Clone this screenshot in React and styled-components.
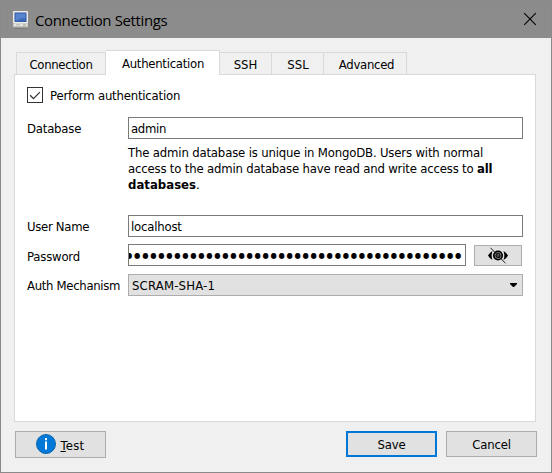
import React from "react";
import styled, { createGlobalStyle, css } from "styled-components";

const GlobalStyle = createGlobalStyle`
  * { box-sizing: border-box; }
  body { margin: 0; background: #efefef; }
`;

const Dialog = styled.main`
  width: 552px;
  height: 473px;
  display: flex;
  flex-direction: column;
  border: 1px solid #8a8a8a;
  background: #f0f0f0;
  color: #000;
  font: 13px/16px "DejaVu Sans Condensed", "DejaVu Sans", sans-serif;
  font-stretch: condensed;
  overflow: hidden;
`;

const TitleBar = styled.header`
  height: 37px;
  flex: none;
  display: flex;
  align-items: center;
  padding: 0 14px 0 11px;
  background: #8c8c8c;
`;

const Title = styled.h1`
  flex: 1;
  margin: 0 0 0 6px;
  font: 400 15px/20px "Open Sans", "Noto Sans", sans-serif;
  font-stretch: normal;
  letter-spacing: -0.37px;
`;

const CloseButton = styled.button`
  display: flex;
  padding: 0;
  margin-bottom: 1px;
  border: 0;
  background: none;
`;

const Label = styled.span`
  padding-top: ${(p) => p.$drop ?? 2}px;
  white-space: nowrap;
  letter-spacing: ${(p) => p.$track ?? -0.2}px;
`;

const TabList = styled.nav`
  display: flex;
  align-items: flex-end;
  height: 37px;
  flex: none;
  padding: 0 15px;
  margin-bottom: -1px;
  z-index: 1;
`;

const Tab = styled.button`
  display: flex;
  align-items: center;
  justify-content: center;
  width: ${(p) => p.$width}px;
  height: 22px;
  margin: 0 0 1px;
  padding: 0 0 0 ${(p) => p.$indent ?? 0}px;
  border: 1px solid #d9d9d9;
  border-width: 1px 1px 0 0;
  background: #f0f0f0;
  color: inherit;
  font: inherit;
  &:first-child { border-left-width: 1px; }
  ${(p) =>
    p.$active &&
    css`
      height: 25px;
      margin: 0;
      padding-bottom: 1px;
      background: #fff;
    `}
`;

const Panel = styled.section`
  width: 522px;
  height: 348px;
  flex: none;
  margin-left: 13px;
  padding: 12px;
  border: 1px solid #d9d9d9;
  background: #fff;
`;

const CheckRow = styled.label`
  display: flex;
  align-items: center;
  height: 16px;
  gap: 7px;
`;

const CheckBox = styled.span`
  display: flex;
  width: 16px;
  height: 16px;
  border: 1px solid #333;
`;

const Row = styled.div`
  display: grid;
  grid-template-columns: 101px 395px;
  align-items: center;
  height: 22px;
  margin-top: ${(p) => p.$gap}px;
`;

const Field = styled.div`
  display: flex;
  align-items: center;
  height: 22px;
  width: ${(p) => p.$width ?? 395}px;
  padding: 0 2px;
  border: 1px solid #7a7a7a;
  background: #fff;
  overflow: hidden;
`;

const PasswordField = styled(Field)`
  justify-content: flex-end;
  padding: 0;
`;

const Dots = styled.span`
  flex: none;
  margin-right: 2px;
  padding-top: 1px;
  font: 8px/20px "DejaVu Sans Condensed", "DejaVu Sans", sans-serif;
  font-stretch: condensed;
  letter-spacing: 1.74px;
  white-space: nowrap;
`;

const Group = styled.div`
  display: flex;
  align-items: center;
  gap: 8px;
`;

const Help = styled.p`
  margin: 6px 0 0 101px;
  height: 48px;
  white-space: nowrap;
`;

const HelpLine = styled.span`
  display: block;
  letter-spacing: ${(p) => p.$track}px;
`;

const RevealButton = styled.button`
  display: flex;
  justify-content: center;
  align-items: center;
  width: 48px;
  height: 21px;
  margin-top: 1px;
  padding: 0;
  border: 1px solid #adadad;
  background: #e1e1e1;
`;

const Select = styled.div`
  display: flex;
  align-items: center;
  justify-content: space-between;
  height: 22px;
  padding: 0 5px 0 3px;
  border: 1px solid #adadad;
  background: #e1e1e1;
`;

const Footer = styled.footer`
  display: flex;
  align-items: flex-start;
  padding: 9px 14px 0;
`;

const Button = styled.button`
  display: flex;
  align-items: center;
  justify-content: center;
  width: 91px;
  height: ${(p) => p.$height ?? 26}px;
  margin-left: ${(p) => p.$gap ?? 0}px;
  padding: 0;
  border: ${(p) => (p.$primary ? "2px solid #0078d7" : "1px solid #adadad")};
  background: #e1e1e1;
  color: inherit;
  font: inherit;
`;

const Mnemonic = styled.span`
  text-decoration: underline;
  text-underline-offset: 1px;
  text-decoration-thickness: 1px;
`;

const TestLabel = styled(Label)`
  margin: 1px 0 0 4px;
`;

const ComputerIcon = () => (
  <svg width="17" height="19" viewBox="0 0 17 19">
    <path d="M2 17.5h13v1H2z" fill="#6f6f6f" />
    <path d="M1.5 13.5h14l.5 3.8H1z" fill="#e4e3df" />
    <path d="M1 17h15" stroke="#a2a19c" />
    <rect x="1" y="1" width="15" height="12.5" rx=".8" fill="#ecebe6" />
    <rect x="2.5" y="2.5" width="12" height="9.5" fill="#2f57a5" />
    <path d="M3.5 3.5h10v4.5q-6 0-10 3.5z" fill="#5784cd" />
    <path d="M3.5 11.5q4-3.5 10-3.5v3z" fill="#3e6dbb" />
    <path d="M4 14.8h4" stroke="#b5b4ae" />
    <path d="M11 15h3" stroke="#8f9a80" />
  </svg>
);

const CloseIcon = () => (
  <svg width="14" height="14" viewBox="0 0 14 14">
    <path d="M1.2 1.2l11.6 11.6M12.8 1.2L1.2 12.8" stroke="#000" strokeWidth="1.1" />
  </svg>
);

const CheckIcon = () => (
  <svg width="14" height="14" viewBox="0 0 14 14">
    <path d="M2.2 7.2l3.3 3.4 6.4-6.5" fill="none" stroke="#333" strokeWidth="1.3" />
  </svg>
);

const HiddenEyeIcon = () => (
  <svg width="20" height="17" viewBox="0 0 20 17">
    <path d="M0 8.5Q1.500 5.500 4.500 4 2.800 8.500 4.500 13 1.500 11.500 0 8.500z" fill="#000" />
    <path d="M20 8.500Q18.500 5.500 15.500 4 17.200 8.500 15.500 13 18.500 11.500 20 8.500z" fill="#000" />
    <circle cx="10" cy="8.500" r="4.200" fill="#a8a8a8" stroke="#000" strokeWidth="1.700" />
    <circle cx="10" cy="8.500" r="2" fill="#777" stroke="#000" strokeWidth="1.200" />
    <path d="M2.500 .8L17.500 16.300" stroke="#222" strokeWidth="1" />
  </svg>
);

const ArrowIcon = () => (
  <svg width="7" height="4" viewBox="0 0 7 4">
    <path d="M0 0h7v1L4 4H3L0 1z" fill="#000" />
  </svg>
);

const InfoSvg = styled.svg`
  margin-bottom: 1px;
`;

const InfoIcon = () => (
  <InfoSvg width="20" height="20" viewBox="0 0 20 20">
    <circle cx="10" cy="10" r="9.500" fill="#0078d7" stroke="#0865ad" />
    <rect x="9" y="4" width="2" height="2.200" fill="#fff" />
    <rect x="9" y="7.500" width="2" height="8" fill="#fff" />
  </InfoSvg>
);

const tabs = [
  { name: "Connection", width: 90, track: -0.3 },
  { name: "Authentication", width: 114, active: true, track: -0.27, indent: 1 },
  { name: "SSH", width: 52, track: 0 },
  { name: "SSL", width: 52, track: 0, indent: 1 },
  { name: "Advanced", width: 83, track: -0.3, indent: 3 },
];

export default function App() {
  return (
    <>
      <GlobalStyle />
      <Dialog>
        <TitleBar>
          <ComputerIcon />
          <Title>Connection Settings</Title>
          <CloseButton aria-label="Close"><CloseIcon /></CloseButton>
        </TitleBar>
        <TabList>
          {tabs.map((tab) => (
            <Tab key={tab.name} $width={tab.width} $active={tab.active} $indent={tab.indent}>
              <Label $track={tab.track}>{tab.name}</Label>
            </Tab>
          ))}
        </TabList>
        <Panel>
          <CheckRow>
            <CheckBox><CheckIcon /></CheckBox>
            <Label>Perform authentication</Label>
          </CheckRow>
          <Row $gap={14}>
            <Label>Database</Label>
            <Field><Label $track={-0.3}>admin</Label></Field>
          </Row>
          <Help>
            <HelpLine $track={-0.165}>The admin database is unique in MongoDB. Users with normal</HelpLine>
            <HelpLine $track={-0.18}>access to the admin database have read and write access to <b>all</b></HelpLine>
            <HelpLine $track={0.02}><b>databases</b>.</HelpLine>
          </Help>
          <Row $gap={22}>
            <Label $track={-0.3}>User Name</Label>
            <Field><Label>localhost</Label></Field>
          </Row>
          <Row $gap={7}>
            <Label $drop={4}>Password</Label>
            <Group>
              <PasswordField $width={338}><Dots>{"●".repeat(42)}</Dots></PasswordField>
              <RevealButton aria-label="Show password"><HiddenEyeIcon /></RevealButton>
            </Group>
          </Row>
          <Row $gap={8}>
            <Label $track={-0.32}>Auth Mechanism</Label>
            <Select><Label $track={0.18}>SCRAM-SHA-1</Label><ArrowIcon /></Select>
          </Row>
        </Panel>
        <Footer>
          <Button $height={27}>
            <InfoIcon />
            <TestLabel $track={0.3}><Mnemonic>T</Mnemonic>est</TestLabel>
          </Button>
          <Button $primary $gap={240}><Label>Save</Label></Button>
          <Button $gap={9}><Label>Cancel</Label></Button>
        </Footer>
      </Dialog>
    </>
  );
}
